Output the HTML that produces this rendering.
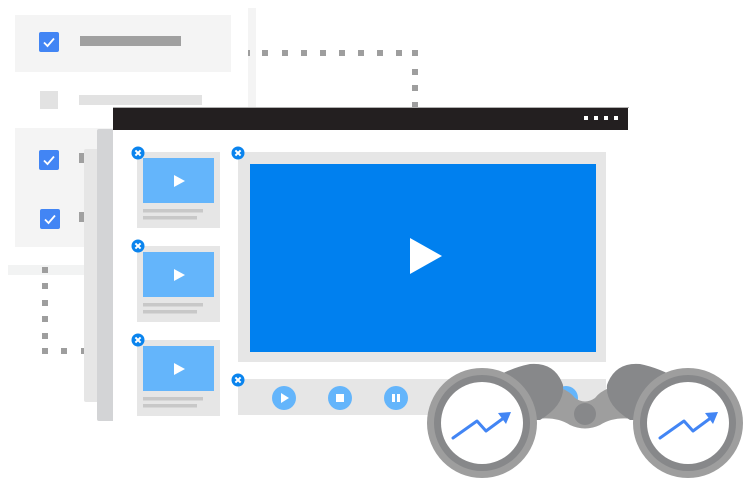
<!DOCTYPE html>
<html><head><style>html,body{margin:0;padding:0;background:#fff;}svg{display:block}</style></head>
<body>
<svg width="744" height="480" viewBox="0 0 744 480" xmlns="http://www.w3.org/2000/svg">
<defs>
<g id="chk"><rect width="20" height="20" rx="2" fill="#4285f4"/><path d="M5 10.5 L8.5 14 L15 6.5" stroke="#fff" stroke-width="1.8" fill="none"/></g>
<g id="x"><circle r="6.5" fill="#0a84ee"/><path d="M-2.6 -2.6 L2.6 2.6 M2.6 -2.6 L-2.6 2.6" stroke="#fff" stroke-width="2"/></g>
<g id="thumb"><rect width="83" height="76" fill="#e6e6e6"/><rect x="6" y="6" width="71" height="45" fill="#64b5fb"/><path d="M37 23 L48 29 L37 35Z" fill="#fff"/><rect x="6" y="57" width="60" height="3.5" fill="#c8c8c8"/><rect x="6" y="64" width="54" height="3.5" fill="#c8c8c8"/></g>
</defs>
<rect x="15" y="15" width="216" height="57" fill="#f4f4f4"/>
<use href="#chk" x="39" y="32"/>
<rect x="80" y="36" width="101" height="10" fill="#a0a0a0"/>
<rect x="40" y="91" width="18" height="18" fill="#e2e2e2"/>
<rect x="79" y="95" width="123" height="10" fill="#e2e2e2"/>
<rect x="15" y="128" width="216" height="119" fill="#f4f4f4"/>
<use href="#chk" x="39" y="150"/>
<use href="#chk" x="40" y="209"/>
<rect x="79" y="153" width="6" height="10" fill="#a0a0a0"/>
<rect x="79" y="212" width="6" height="10" fill="#a0a0a0"/>
<rect x="248" y="8" width="8" height="110" fill="#f4f4f4"/>
<rect x="8" y="265" width="78" height="10" fill="#f2f3f3"/>
<g fill="#9e9e9e">
<rect x="248" y="50" width="2" height="6"/>
<rect x="262" y="50" width="6" height="6"/><rect x="282" y="50" width="6" height="6"/><rect x="301" y="50" width="6" height="6"/><rect x="320" y="50" width="6" height="6"/><rect x="339" y="50" width="6" height="6"/><rect x="358" y="50" width="6" height="6"/><rect x="377" y="50" width="6" height="6"/><rect x="396" y="50" width="6" height="6"/>
<rect x="412" y="50" width="6" height="6"/><rect x="412" y="69" width="6" height="6"/><rect x="412" y="85" width="6" height="6"/><rect x="412" y="102" width="6" height="6"/>
<rect x="42" y="267" width="6" height="6"/><rect x="42" y="283" width="6" height="6"/><rect x="42" y="300" width="6" height="6"/><rect x="42" y="316" width="6" height="6"/><rect x="42" y="333" width="6" height="6"/>
<rect x="42" y="348" width="6" height="6"/><rect x="61" y="348" width="6" height="6"/><rect x="81" y="348" width="4" height="6"/>
</g>
<rect x="84" y="149" width="20" height="253" rx="2" fill="#e6e6e6"/>
<rect x="97" y="129" width="20" height="292" rx="2" fill="#d3d4d6"/>
<rect x="113" y="130" width="515" height="292" fill="#fff"/>
<rect x="113" y="107" width="516" height="1" fill="#b0b0b0"/>
<rect x="113" y="108" width="515" height="22" fill="#231f20"/>
<g fill="#fff"><rect x="584" y="116" width="4" height="4"/><rect x="594" y="116" width="4" height="4"/><rect x="604" y="116" width="4" height="4"/><rect x="614" y="116" width="4" height="4"/></g>
<use href="#thumb" x="137" y="152"/>
<use href="#thumb" x="137" y="246"/>
<use href="#thumb" x="137" y="340"/>
<rect x="238" y="152" width="368" height="210" fill="#e6e6e6"/>
<rect x="250" y="164" width="346" height="188" fill="#0080ef"/>
<path d="M410 238 L442 256 L410 274Z" fill="#fff"/>
<rect x="238" y="379" width="368" height="36" fill="#e6e6e6"/>
<circle cx="284" cy="398" r="12" fill="#64b5fb"/><path d="M281 393 L289 398 L281 403Z" fill="#fff"/>
<circle cx="340" cy="398" r="12" fill="#64b5fb"/><rect x="336" y="394" width="8" height="8" fill="#fff"/>
<circle cx="396" cy="398" r="12" fill="#64b5fb"/><rect x="392" y="394" width="3" height="8" fill="#fff"/><rect x="397" y="394" width="3" height="8" fill="#fff"/>
<circle cx="566" cy="398" r="12" fill="#64b5fb"/>
<use href="#x" x="138" y="153"/>
<use href="#x" x="238" y="153"/>
<use href="#x" x="138" y="246"/>
<use href="#x" x="138" y="340"/>
<use href="#x" x="238" y="380"/>
<path d="M540 385 Q565 385 575 398 Q585 405 595 398 Q605 385 630 385 L640 420 Q615 415 600 425 Q585 432 570 425 Q555 415 530 420Z" fill="#9e9e9e"/>
<path d="M490 380 Q510 368 530 364 Q555 362 563 385 Q565 405 540 420 L500 420Z" fill="#87888a"/>
<path d="M680 380 Q660 368 640 364 Q615 362 607 385 Q605 405 630 420 L670 420Z" fill="#87888a"/>
<circle cx="585" cy="414" r="11" fill="#87888a"/>
<circle cx="482" cy="423" r="55" fill="#9e9e9e"/>
<circle cx="482" cy="423" r="48" fill="#87888a"/>
<circle cx="482" cy="423" r="41" fill="#fff"/>
<circle cx="688" cy="423" r="55" fill="#9e9e9e"/>
<circle cx="688" cy="423" r="48" fill="#87888a"/>
<circle cx="688" cy="423" r="41" fill="#fff"/>
<g stroke="#4285f4" stroke-width="3" fill="none" stroke-linecap="round" stroke-linejoin="round">
<path d="M453 438 L477 421 L486 431 L505 417"/>
<path d="M660 438 L684 421 L693 431 L712 417"/>
</g>
<path d="M511 412 L498 413 L506 424Z" fill="#4285f4"/>
<path d="M718 412 L705 413 L713 424Z" fill="#4285f4"/>
</svg>
</body></html>
